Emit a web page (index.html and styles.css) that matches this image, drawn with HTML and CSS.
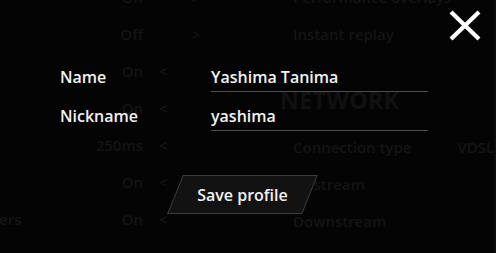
FILE: index.html
```html
<!DOCTYPE html>
<html lang="en">
<head>
<meta charset="utf-8">
<title>Profile</title>
<link rel="stylesheet" href="styles.css">
</head>
<body>
<div class="screen">
  <div class="settings">
    <div class="col-left">
      <div class="srow"><span class="slabel"></span><span class="svalue">On</span><span class="arrow"></span><span class="arrow">&gt;</span></div>
      <div class="srow"><span class="slabel"></span><span class="svalue">Off</span><span class="arrow"></span><span class="arrow">&gt;</span></div>
      <div class="srow"><span class="slabel"></span><span class="svalue">On</span><span class="arrow">&lt;</span><span class="arrow"></span></div>
      <div class="srow"><span class="slabel"></span><span class="svalue">On</span><span class="arrow">&lt;</span><span class="arrow"></span></div>
      <div class="srow"><span class="slabel"></span><span class="svalue">250ms</span><span class="arrow">&lt;</span><span class="arrow"></span></div>
      <div class="srow"><span class="slabel"></span><span class="svalue">On</span><span class="arrow">&lt;</span><span class="arrow"></span></div>
      <div class="srow"><span class="slabel">Show peers</span><span class="svalue">On</span><span class="arrow">&lt;</span><span class="arrow"></span></div>
    </div>
    <div class="col-right">
      <div class="srow2"><span>Performance overlays</span></div>
      <div class="srow2"><span>Instant replay</span></div>
      <div class="heading">NETWORK</div>
      <div class="srow2"><span>Connection type</span><span class="rvalue">VDSL</span></div>
      <div class="srow2"><span>Upstream</span></div>
      <div class="srow2"><span>Downstream</span></div>
    </div>
  </div>

  <div class="overlay">
    <button class="close" aria-label="Close">
      <svg width="34" height="31" viewBox="0 0 34 31"><path d="M3 2 L31 29 M31 2 L3 29" stroke="#ffffff" stroke-width="4.2" stroke-linecap="butt"/></svg>
    </button>
    <form class="profile">
      <label class="flabel">Name</label>
      <div class="field">Yashima Tanima</div>
      <label class="flabel">Nickname</label>
      <div class="field">yashima</div>
      <div class="actions">
        <button type="button" class="save"><span>Save profile</span></button>
      </div>
    </form>
  </div>
</div>
</body>
</html>
```

FILE: styles.css
```css
html, body {
  margin: 0;
  padding: 0;
  background: #040404;
}
body {
  width: 496px;
  height: 253px;
  overflow: hidden;
  font-family: "Open Sans", "Noto Sans", sans-serif;
}
.screen {
  position: relative;
  width: 496px;
  height: 253px;
  overflow: hidden;
}

/* faint settings page behind the dialog */
.settings {
  display: grid;
  grid-template-columns: 293px 203px;
  margin-top: -22px;
  color: #141414;
  font-size: 15px;
  font-weight: 600;
  border-right: 2px solid #0c0c0c;
  box-sizing: border-box;
  height: 280px;
}
.col-left {
  display: flex;
  flex-direction: column;
}
.srow {
  height: 37px;
  display: grid;
  align-items: center;
  margin-left: -62px;
  grid-template-columns: 80px 125px 40px 26px;
}
.slabel {
  white-space: nowrap;
}
.svalue {
  text-align: right;
}
.arrow {
  text-align: center;
}
.col-right {
  display: flex;
  flex-direction: column;
}
.srow2 {
  height: 37px;
  display: flex;
  align-items: center;
  white-space: nowrap;
}
.rvalue {
  margin-left: 46px;
}
.heading {
  height: 76px;
  box-sizing: border-box;
  padding-top: 32px;
  margin-left: -13px;
  font-size: 23px;
  font-weight: 700;
  letter-spacing: 0.5px;
  color: #111111;
}

/* dialog */
.overlay {
  position: absolute;
  inset: 0;
}
.close {
  position: absolute;
  top: 10px;
  left: 448px;
  padding: 0;
  margin: 0;
  border: 0;
  background: none;
  width: 34px;
  height: 31px;
  display: block;
}
.close svg {
  display: block;
}
.profile {
  display: grid;
  grid-template-columns: 151px 217px;
  row-gap: 13px;
  margin: 0;
  padding: 66px 0 0 60px;
  color: #f2f2f2;
  font-size: 16px;
  font-weight: 600;
  line-height: 22px;
}
.flabel {
  padding-bottom: 4px;
}
.field {
  padding-bottom: 3px;
  border-bottom: 1px solid #4e4e4e;
  white-space: nowrap;
}
.actions {
  grid-column: 1 / span 2;
  margin-top: 31px;
  padding-left: 115px;
}
.save {
  position: relative;
  width: 135px;
  height: 39px;
  padding: 0;
  margin: 0;
  border: 0;
  background: none;
  font: inherit;
  color: #f2f2f2;
  line-height: 22px;
}
.save::before {
  content: "";
  position: absolute;
  inset: 0;
  background: #121212;
  border: 1px solid #3c3c3c;
  transform: skewX(-22deg);
}
.save span {
  position: relative;
}
```
